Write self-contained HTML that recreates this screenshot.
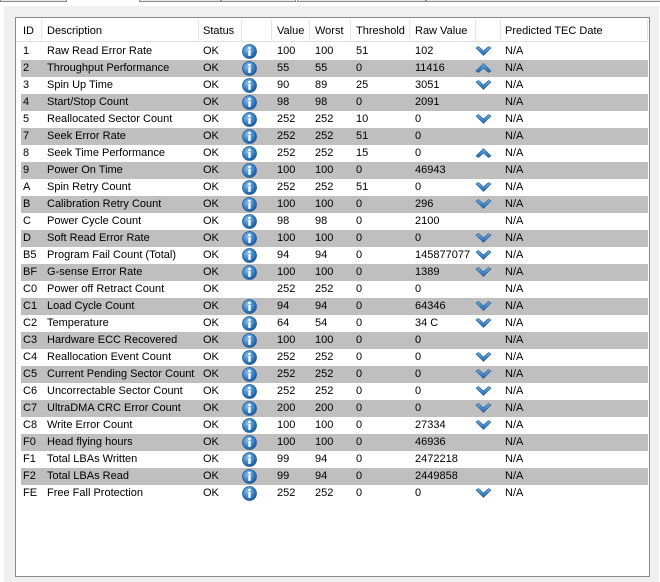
<!DOCTYPE html>
<html><head><meta charset="utf-8"><style>
*{margin:0;padding:0;box-sizing:border-box}
body{width:660px;height:582px;background:#fff;position:relative;overflow:hidden;font-family:"Liberation Sans",sans-serif;font-size:11px;color:#000}
.tab{position:absolute;top:-2px;height:4px;border:1px solid #8a8a8a;background:#e8e8e8}
#panel{position:absolute;left:4px;top:6px;width:655px;height:576px;background:#f0f0f0}
#box{position:absolute;left:15px;top:17px;width:635px;height:560px;background:#fff;border:1px solid #8a8a8a}
.hdr{position:absolute;top:20px;height:22px;left:17px;width:631px;border-bottom:1px solid #e0e0e0}
.sep{position:absolute;top:20px;height:21px;width:1px;background:#e6e6e6}
.r{position:absolute;left:21px;width:627px;height:17px}
.g{background:#bfbfbf}
.c{position:absolute;top:2px;white-space:nowrap}
.h{position:absolute;top:25px;white-space:nowrap}
.i{position:absolute;left:221px;top:1px;width:15px;height:15px}
.a{position:absolute;left:454px;top:3px;width:17px;height:10px}
</style></head><body>
<div class="tab" style="left:0;width:67px"></div>
<div class="tab" style="left:139px;width:82px"></div>
<div class="tab" style="left:221px;width:75px"></div>
<div class="tab" style="left:297px;width:129px"></div>
<div class="tab" style="left:426px;width:240px"></div>
<div id="panel"></div>
<div id="box"></div>
<div class="hdr"></div>
<div class="sep" style="left:41px"></div><div class="sep" style="left:198px"></div><div class="sep" style="left:241px"></div><div class="sep" style="left:271px"></div><div class="sep" style="left:309px"></div><div class="sep" style="left:350px"></div><div class="sep" style="left:409px"></div><div class="sep" style="left:475px"></div><div class="sep" style="left:500px"></div><div class="sep" style="left:647px"></div>
<div class="h" style="left:23px">ID</div><div class="h" style="left:47px">Description</div><div class="h" style="left:203px">Status</div><div class="h" style="left:277px">Value</div><div class="h" style="left:315px">Worst</div><div class="h" style="left:356px">Threshold</div><div class="h" style="left:415px">Raw Value</div><div class="h" style="left:505px">Predicted TEC Date</div>
<svg width="0" height="0" style="position:absolute"><defs>
<radialGradient id="gb" cx="40%" cy="35%" r="65%"><stop offset="0" stop-color="#8cc4f0"/><stop offset="0.6" stop-color="#3a86cc"/><stop offset="1" stop-color="#1b5a9c"/></radialGradient>
<linearGradient id="ga" x1="0" y1="0" x2="0" y2="1"><stop offset="0" stop-color="#6fb0e6"/><stop offset="1" stop-color="#1f62a8"/></linearGradient>
<symbol id="info" viewBox="0 0 15 15"><circle cx="7.5" cy="7.5" r="7" fill="url(#gb)" stroke="#2a5f95" stroke-width="0.8"/><circle cx="7.5" cy="4" r="1.4" fill="#fff"/><rect x="6.3" y="6" width="2.4" height="6" rx="0.6" fill="#fff"/></symbol>
<symbol id="dn" viewBox="0 0 17 10"><path d="M1 2 L3.5 0.5 L8.5 5 L13.5 0.5 L16 2 L8.5 9.5 Z" fill="url(#ga)" stroke="#1f5a98" stroke-width="0.6"/></symbol>
<symbol id="up" viewBox="0 0 17 10"><path d="M1 8 L3.5 9.5 L8.5 5 L13.5 9.5 L16 8 L8.5 0.5 Z" fill="url(#ga)" stroke="#1f5a98" stroke-width="0.6"/></symbol>
</defs></svg>

<div class="r" style="top:43px"><span class="c" style="left:2px">1</span><span class="c" style="left:26px">Raw Read Error Rate</span><span class="c" style="left:182px">OK</span><svg class="i"><use href="#info"/></svg><span class="c" style="left:256px">100</span><span class="c" style="left:294px">100</span><span class="c" style="left:335px">51</span><span class="c" style="left:394px">102</span><svg class="a"><use href="#dn"/></svg><span class="c" style="left:484px">N/A</span></div>
<div class="r g" style="top:60px"><span class="c" style="left:2px">2</span><span class="c" style="left:26px">Throughput Performance</span><span class="c" style="left:182px">OK</span><svg class="i"><use href="#info"/></svg><span class="c" style="left:256px">55</span><span class="c" style="left:294px">55</span><span class="c" style="left:335px">0</span><span class="c" style="left:394px">11416</span><svg class="a"><use href="#up"/></svg><span class="c" style="left:484px">N/A</span></div>
<div class="r" style="top:77px"><span class="c" style="left:2px">3</span><span class="c" style="left:26px">Spin Up Time</span><span class="c" style="left:182px">OK</span><svg class="i"><use href="#info"/></svg><span class="c" style="left:256px">90</span><span class="c" style="left:294px">89</span><span class="c" style="left:335px">25</span><span class="c" style="left:394px">3051</span><svg class="a"><use href="#dn"/></svg><span class="c" style="left:484px">N/A</span></div>
<div class="r g" style="top:94px"><span class="c" style="left:2px">4</span><span class="c" style="left:26px">Start/Stop Count</span><span class="c" style="left:182px">OK</span><svg class="i"><use href="#info"/></svg><span class="c" style="left:256px">98</span><span class="c" style="left:294px">98</span><span class="c" style="left:335px">0</span><span class="c" style="left:394px">2091</span><span class="c" style="left:484px">N/A</span></div>
<div class="r" style="top:111px"><span class="c" style="left:2px">5</span><span class="c" style="left:26px">Reallocated Sector Count</span><span class="c" style="left:182px">OK</span><svg class="i"><use href="#info"/></svg><span class="c" style="left:256px">252</span><span class="c" style="left:294px">252</span><span class="c" style="left:335px">10</span><span class="c" style="left:394px">0</span><svg class="a"><use href="#dn"/></svg><span class="c" style="left:484px">N/A</span></div>
<div class="r g" style="top:128px"><span class="c" style="left:2px">7</span><span class="c" style="left:26px">Seek Error Rate</span><span class="c" style="left:182px">OK</span><svg class="i"><use href="#info"/></svg><span class="c" style="left:256px">252</span><span class="c" style="left:294px">252</span><span class="c" style="left:335px">51</span><span class="c" style="left:394px">0</span><span class="c" style="left:484px">N/A</span></div>
<div class="r" style="top:145px"><span class="c" style="left:2px">8</span><span class="c" style="left:26px">Seek Time Performance</span><span class="c" style="left:182px">OK</span><svg class="i"><use href="#info"/></svg><span class="c" style="left:256px">252</span><span class="c" style="left:294px">252</span><span class="c" style="left:335px">15</span><span class="c" style="left:394px">0</span><svg class="a"><use href="#up"/></svg><span class="c" style="left:484px">N/A</span></div>
<div class="r g" style="top:162px"><span class="c" style="left:2px">9</span><span class="c" style="left:26px">Power On Time</span><span class="c" style="left:182px">OK</span><svg class="i"><use href="#info"/></svg><span class="c" style="left:256px">100</span><span class="c" style="left:294px">100</span><span class="c" style="left:335px">0</span><span class="c" style="left:394px">46943</span><span class="c" style="left:484px">N/A</span></div>
<div class="r" style="top:179px"><span class="c" style="left:2px">A</span><span class="c" style="left:26px">Spin Retry Count</span><span class="c" style="left:182px">OK</span><svg class="i"><use href="#info"/></svg><span class="c" style="left:256px">252</span><span class="c" style="left:294px">252</span><span class="c" style="left:335px">51</span><span class="c" style="left:394px">0</span><svg class="a"><use href="#dn"/></svg><span class="c" style="left:484px">N/A</span></div>
<div class="r g" style="top:196px"><span class="c" style="left:2px">B</span><span class="c" style="left:26px">Calibration Retry Count</span><span class="c" style="left:182px">OK</span><svg class="i"><use href="#info"/></svg><span class="c" style="left:256px">100</span><span class="c" style="left:294px">100</span><span class="c" style="left:335px">0</span><span class="c" style="left:394px">296</span><svg class="a"><use href="#dn"/></svg><span class="c" style="left:484px">N/A</span></div>
<div class="r" style="top:213px"><span class="c" style="left:2px">C</span><span class="c" style="left:26px">Power Cycle Count</span><span class="c" style="left:182px">OK</span><svg class="i"><use href="#info"/></svg><span class="c" style="left:256px">98</span><span class="c" style="left:294px">98</span><span class="c" style="left:335px">0</span><span class="c" style="left:394px">2100</span><span class="c" style="left:484px">N/A</span></div>
<div class="r g" style="top:230px"><span class="c" style="left:2px">D</span><span class="c" style="left:26px">Soft Read Error Rate</span><span class="c" style="left:182px">OK</span><svg class="i"><use href="#info"/></svg><span class="c" style="left:256px">100</span><span class="c" style="left:294px">100</span><span class="c" style="left:335px">0</span><span class="c" style="left:394px">0</span><svg class="a"><use href="#dn"/></svg><span class="c" style="left:484px">N/A</span></div>
<div class="r" style="top:247px"><span class="c" style="left:2px">B5</span><span class="c" style="left:26px">Program Fail Count (Total)</span><span class="c" style="left:182px">OK</span><svg class="i"><use href="#info"/></svg><span class="c" style="left:256px">94</span><span class="c" style="left:294px">94</span><span class="c" style="left:335px">0</span><span class="c" style="left:394px">145877077</span><svg class="a"><use href="#dn"/></svg><span class="c" style="left:484px">N/A</span></div>
<div class="r g" style="top:264px"><span class="c" style="left:2px">BF</span><span class="c" style="left:26px">G-sense Error Rate</span><span class="c" style="left:182px">OK</span><svg class="i"><use href="#info"/></svg><span class="c" style="left:256px">100</span><span class="c" style="left:294px">100</span><span class="c" style="left:335px">0</span><span class="c" style="left:394px">1389</span><svg class="a"><use href="#dn"/></svg><span class="c" style="left:484px">N/A</span></div>
<div class="r" style="top:281px"><span class="c" style="left:2px">C0</span><span class="c" style="left:26px">Power off Retract Count</span><span class="c" style="left:182px">OK</span><span class="c" style="left:256px">252</span><span class="c" style="left:294px">252</span><span class="c" style="left:335px">0</span><span class="c" style="left:394px">0</span><span class="c" style="left:484px">N/A</span></div>
<div class="r g" style="top:298px"><span class="c" style="left:2px">C1</span><span class="c" style="left:26px">Load Cycle Count</span><span class="c" style="left:182px">OK</span><svg class="i"><use href="#info"/></svg><span class="c" style="left:256px">94</span><span class="c" style="left:294px">94</span><span class="c" style="left:335px">0</span><span class="c" style="left:394px">64346</span><svg class="a"><use href="#dn"/></svg><span class="c" style="left:484px">N/A</span></div>
<div class="r" style="top:315px"><span class="c" style="left:2px">C2</span><span class="c" style="left:26px">Temperature</span><span class="c" style="left:182px">OK</span><svg class="i"><use href="#info"/></svg><span class="c" style="left:256px">64</span><span class="c" style="left:294px">54</span><span class="c" style="left:335px">0</span><span class="c" style="left:394px">34 C</span><svg class="a"><use href="#dn"/></svg><span class="c" style="left:484px">N/A</span></div>
<div class="r g" style="top:332px"><span class="c" style="left:2px">C3</span><span class="c" style="left:26px">Hardware ECC Recovered</span><span class="c" style="left:182px">OK</span><svg class="i"><use href="#info"/></svg><span class="c" style="left:256px">100</span><span class="c" style="left:294px">100</span><span class="c" style="left:335px">0</span><span class="c" style="left:394px">0</span><span class="c" style="left:484px">N/A</span></div>
<div class="r" style="top:349px"><span class="c" style="left:2px">C4</span><span class="c" style="left:26px">Reallocation Event Count</span><span class="c" style="left:182px">OK</span><svg class="i"><use href="#info"/></svg><span class="c" style="left:256px">252</span><span class="c" style="left:294px">252</span><span class="c" style="left:335px">0</span><span class="c" style="left:394px">0</span><svg class="a"><use href="#dn"/></svg><span class="c" style="left:484px">N/A</span></div>
<div class="r g" style="top:366px"><span class="c" style="left:2px">C5</span><span class="c" style="left:26px">Current Pending Sector Count</span><span class="c" style="left:182px">OK</span><svg class="i"><use href="#info"/></svg><span class="c" style="left:256px">252</span><span class="c" style="left:294px">252</span><span class="c" style="left:335px">0</span><span class="c" style="left:394px">0</span><svg class="a"><use href="#dn"/></svg><span class="c" style="left:484px">N/A</span></div>
<div class="r" style="top:383px"><span class="c" style="left:2px">C6</span><span class="c" style="left:26px">Uncorrectable Sector Count</span><span class="c" style="left:182px">OK</span><svg class="i"><use href="#info"/></svg><span class="c" style="left:256px">252</span><span class="c" style="left:294px">252</span><span class="c" style="left:335px">0</span><span class="c" style="left:394px">0</span><svg class="a"><use href="#dn"/></svg><span class="c" style="left:484px">N/A</span></div>
<div class="r g" style="top:400px"><span class="c" style="left:2px">C7</span><span class="c" style="left:26px">UltraDMA CRC Error Count</span><span class="c" style="left:182px">OK</span><svg class="i"><use href="#info"/></svg><span class="c" style="left:256px">200</span><span class="c" style="left:294px">200</span><span class="c" style="left:335px">0</span><span class="c" style="left:394px">0</span><svg class="a"><use href="#dn"/></svg><span class="c" style="left:484px">N/A</span></div>
<div class="r" style="top:417px"><span class="c" style="left:2px">C8</span><span class="c" style="left:26px">Write Error Count</span><span class="c" style="left:182px">OK</span><svg class="i"><use href="#info"/></svg><span class="c" style="left:256px">100</span><span class="c" style="left:294px">100</span><span class="c" style="left:335px">0</span><span class="c" style="left:394px">27334</span><svg class="a"><use href="#dn"/></svg><span class="c" style="left:484px">N/A</span></div>
<div class="r g" style="top:434px"><span class="c" style="left:2px">F0</span><span class="c" style="left:26px">Head flying hours</span><span class="c" style="left:182px">OK</span><svg class="i"><use href="#info"/></svg><span class="c" style="left:256px">100</span><span class="c" style="left:294px">100</span><span class="c" style="left:335px">0</span><span class="c" style="left:394px">46936</span><span class="c" style="left:484px">N/A</span></div>
<div class="r" style="top:451px"><span class="c" style="left:2px">F1</span><span class="c" style="left:26px">Total LBAs Written</span><span class="c" style="left:182px">OK</span><svg class="i"><use href="#info"/></svg><span class="c" style="left:256px">99</span><span class="c" style="left:294px">94</span><span class="c" style="left:335px">0</span><span class="c" style="left:394px">2472218</span><span class="c" style="left:484px">N/A</span></div>
<div class="r g" style="top:468px"><span class="c" style="left:2px">F2</span><span class="c" style="left:26px">Total LBAs Read</span><span class="c" style="left:182px">OK</span><svg class="i"><use href="#info"/></svg><span class="c" style="left:256px">99</span><span class="c" style="left:294px">94</span><span class="c" style="left:335px">0</span><span class="c" style="left:394px">2449858</span><span class="c" style="left:484px">N/A</span></div>
<div class="r" style="top:485px"><span class="c" style="left:2px">FE</span><span class="c" style="left:26px">Free Fall Protection</span><span class="c" style="left:182px">OK</span><svg class="i"><use href="#info"/></svg><span class="c" style="left:256px">252</span><span class="c" style="left:294px">252</span><span class="c" style="left:335px">0</span><span class="c" style="left:394px">0</span><svg class="a"><use href="#dn"/></svg><span class="c" style="left:484px">N/A</span></div>
</body></html>
